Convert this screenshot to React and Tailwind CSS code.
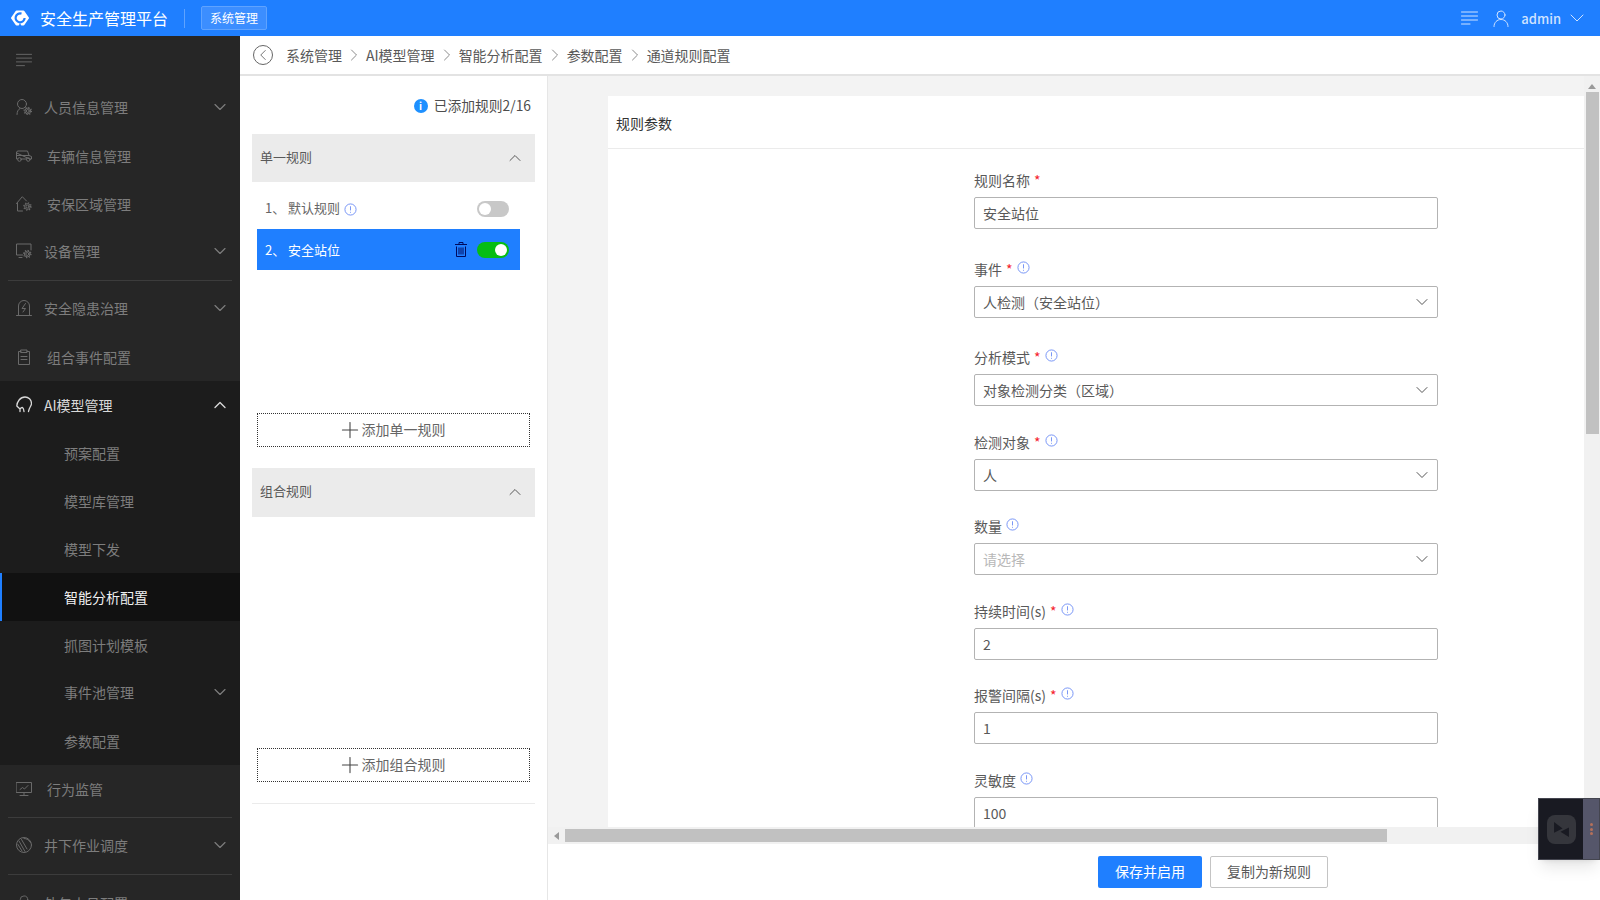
import { ChevronDown, ChevronUp, ChevronRight, ChevronLeft, Plus } from 'lucide-react'

const stroke = { fill: 'none', stroke: 'currentColor', strokeWidth: 1, strokeLinecap: 'round', strokeLinejoin: 'round' }

function Gear({ cx, cy }) {
  return (
    <g {...stroke}>
      <circle cx={cx} cy={cy} r="1.5" />
      <circle cx={cx} cy={cy} r="2.9" />
      <circle cx={cx} cy={cy} r="3.7" strokeDasharray="1.2 1.7" strokeWidth="1.2" strokeLinecap="butt" />
    </g>
  )
}

function MenuLines({ className }) {
  return (
    <svg viewBox="0 0 17 14" className={className} {...stroke}>
      <path d="M0.5 1h16M0.5 5h16M0.5 9h16M0.5 13h8.500" />
    </svg>
  )
}

function IconPerson() {
  return (
    <svg viewBox="0 0 16 16" className="w-4 h-4 shrink-0" {...stroke}>
      <circle cx="6" cy="5" r="4.500" />
      <path d="M1 15.500c0-3 1.200-5 3-6" />
      <Gear cx={11.800} cy={12} />
    </svg>
  )
}

function IconCar() {
  return (
    <svg viewBox="0 0 16 12" className="w-4 h-3 shrink-0" {...stroke}>
      <path d="M.5 2.500V9h1.200M5.300 9h5.400M14 9h1.500V6.500L13 5.500 11.500 1H2a1.500 1.500 0 0 0-1.500 1.500zM.5 5.500H13" />
      <circle cx="3.500" cy="9.500" r="1.800" />
      <circle cx="12.300" cy="9.500" r="1.800" />
    </svg>
  )
}

function IconHome() {
  return (
    <svg viewBox="0 0 16 16" className="w-4 h-4 shrink-0" {...stroke}>
      <path d="M.5 7.500L6.300.7l4.200 4.300M1.500 7v8h5" />
      <Gear cx={11.500} cy={10.500} />
    </svg>
  )
}

function IconMonitor() {
  return (
    <svg viewBox="0 0 16 16" className="w-4 h-4 shrink-0" {...stroke}>
      <path d="M6.500 12H.5V1H15v6M3 14.500h3" />
      <Gear cx={11.300} cy={11} />
    </svg>
  )
}

function IconHazard() {
  return (
    <svg viewBox="0 0 16 16" className="w-4 h-4 shrink-0" {...stroke}>
      <path d="M2.500 15V6a5.500 5.500 0 0 1 11 0v9M.5 15.500h15M9.500 3.500L6 8.500h3.500L7 12" />
    </svg>
  )
}

function IconClipboard() {
  return (
    <svg viewBox="0 0 14 16" className="w-[14px] h-4 shrink-0" {...stroke}>
      <path d="M4 2.500H1.500v13h11v-13H10M4 1h6v2.500H4zM4 7.500h6M4 10.500h6" />
    </svg>
  )
}

function IconHead() {
  return (
    <svg viewBox="0 0 16 17" className="w-4 h-[17px] shrink-0" {...stroke} strokeWidth="1.300">
      <path d="M4 15.500V13L.8 10C1 6 4 1 9 1c3.500 0 6.500 2.500 6.500 6.500 0 2.500-2.500 4-3 8M4 13c2-2.500 3.500-2 4 2.500" />
    </svg>
  )
}

function IconChart() {
  return (
    <svg viewBox="0 0 16 14" className="w-4 h-[14px] shrink-0" {...stroke}>
      <path d="M.5 .5h15v10H.5zM8 10.500V13M4 13.500h8M4 7.500l2.500-2 2 1.500L12 3.500" />
    </svg>
  )
}

function IconGlobe() {
  return (
    <svg viewBox="0 0 16 16" className="w-4 h-4 shrink-0" {...stroke}>
      <circle cx="8" cy="8" r="7.500" />
      <path d="M3 4l6 10.500M5.500 2.500L11 12M2 7.500l4 6.500M8 1.500c3 0 5 1.500 6.500 4" />
    </svg>
  )
}

function IconUser({ className }) {
  return (
    <svg viewBox="0 0 16 17" className={className} {...stroke}>
      <circle cx="8" cy="5" r="4" />
      <path d="M1 16.500c0-4 3-7 7-7s7 3 7 7" />
    </svg>
  )
}

function IconTrash() {
  return (
    <svg viewBox="0 0 12 15" className="w-3 h-[15px] mr-[10px] text-[#000b5e]" fill="none" stroke="currentColor">
      <path d="M0 2.500h12M4 2.500V.5h4v2M1.500 4.500v10h9v-10M4 5.500v7M6 5.500v7M8 5.500v7" />
    </svg>
  )
}

function Logo() {
  return (
    <svg viewBox="0 0 18 16" className="w-[18px] h-4">
      <path fill="#fff" stroke="#fff" strokeWidth="2" strokeLinejoin="round" d="M5.500 1.500h7L17 8l-4.500 6.500h-7L1 8z" />
      <path fill="none" stroke="#1f7fff" strokeWidth="2.200" d="M10.500 3.600A4.500 4.500 0 1 0 13.600 8" />
      <path fill="#1f7fff" d="M7.500 16l1.500-3 1.500 3z" />
    </svg>
  )
}

function Info() {
  return (
    <svg viewBox="0 0 14 14" className="w-[13px] h-[13px] text-[#6f8ff5] shrink-0" fill="none" stroke="currentColor">
      <circle cx="7" cy="7" r="6" />
      <path d="M7 3.500v4.500M7 9.500v1" />
    </svg>
  )
}

function MenuItem({ icon, label, chevron, active, gap }) {
  return (
    <div className={`flex items-center h-full pl-4 pr-[10px] ${active ? 'text-[#d9d9d9]' : 'text-[#7d7d7d]'}`}>
      <span className={`w-4 flex justify-center ${active ? '' : 'text-[#6a6a6a]'}`}>{icon}</span>
      <span className={`flex-1 text-sm ${gap ? 'ml-[15px]' : 'ml-3'}`}>{label}</span>
      {chevron === 'down' && <ChevronDown size={20} strokeWidth={1.4} />}
      {chevron === 'up' && <ChevronUp size={20} strokeWidth={1.6} />}
    </div>
  )
}

function SubItem({ label, chevron, active, className }) {
  return (
    <div className={`flex items-center pr-[10px] text-sm ${className} ${active ? 'bg-[#111111] text-[#f0f0f0] border-l-2 border-[#1f7fff] pl-[62px]' : 'pl-16 text-[#7d7d7d]'}`}>
      <span className="flex-1">{label}</span>
      {chevron && <ChevronDown size={20} strokeWidth={1.4} />}
    </div>
  )
}

function Sidebar() {
  return (
    <aside className="w-60 shrink-0 bg-[#262626] overflow-hidden">
      <div className="h-[47px] flex items-center pl-4 text-[#6a6a6a]">
        <MenuLines className="w-4 h-[14px]" />
      </div>
      <div className="h-[48px]"><MenuItem icon={<IconPerson />} label="人员信息管理" chevron="down" /></div>
      <div className="h-[50px]"><MenuItem icon={<IconCar />} label="车辆信息管理" gap /></div>
      <div className="h-[46px]"><MenuItem icon={<IconHome />} label="安保区域管理" gap /></div>
      <div className="h-[53px] pb-[5px]"><MenuItem icon={<IconMonitor />} label="设备管理" chevron="down" /></div>
      <div className="mx-2 border-t border-[#3c3c3c]" />
      <div className="h-[52px] pt-[2px]"><MenuItem icon={<IconHazard />} label="安全隐患治理" chevron="down" /></div>
      <div className="h-[48px]"><MenuItem icon={<IconClipboard />} label="组合事件配置" gap /></div>
      <div className="bg-[#1c1c1c]">
        <div className="h-[48px] pb-[1px]"><MenuItem icon={<IconHead />} label="AI模型管理" chevron="up" active /></div>
        <SubItem label="预案配置" className="h-[48px]" />
        <SubItem label="模型库管理" className="h-[48px]" />
        <SubItem label="模型下发" className="h-[48px]" />
        <SubItem label="智能分析配置" active className="h-[48px]" />
        <SubItem label="抓图计划模板" className="h-[48px]" />
        <SubItem label="事件池管理" chevron className="h-[46px]" />
        <SubItem label="参数配置" className="h-[50px] pt-[1px]" />
      </div>
      <div className="h-[52px] pb-1"><MenuItem icon={<IconChart />} label="行为监管" gap /></div>
      <div className="mx-2 border-t border-[#3c3c3c]" />
      <div className="h-[56px] pb-[3px]"><MenuItem icon={<IconGlobe />} label="井下作业调度" chevron="down" /></div>
      <div className="mx-2 border-t border-[#3c3c3c]" />
      <div className="h-[56px]"><MenuItem icon={<IconUser className="w-4 h-4 shrink-0" />} label="外包人员配置" /></div>
    </aside>
  )
}

function Switch({ on }) {
  return (
    <span className={`w-8 h-4 rounded-full flex items-center px-0.5 ${on ? 'bg-[#06bd13] justify-end' : 'bg-[#c8c8c8]'}`}>
      <span className="w-3 h-3 rounded-full bg-white" />
    </span>
  )
}

function GroupHeader({ label, className }) {
  return (
    <div className={`mx-3 px-2 bg-[#ebebeb] flex items-center justify-between text-[13px] text-[#595959] ${className}`}>
      <span className="pb-[3px]">{label}</span>
      <ChevronUp size={20} strokeWidth={1.2} className="mr-[2px] mb-[1px]" />
    </div>
  )
}

function AddButton({ label, className }) {
  return (
    <div className={`mx-[17px] h-[34px] border border-dotted border-[#333333] flex items-center justify-center text-sm text-[#666666] ${className}`}>
      <Plus size={26} strokeWidth={1} className="-ml-[5px] -mr-[1px] text-[#444444]" />
      <span className="pb-[2px]">{label}</span>
    </div>
  )
}

function RulePanel() {
  return (
    <div className="w-[308px] shrink-0 border-r border-[#e6e6e6] bg-white">
      <div className="h-[58px] pt-[1px] pr-4 flex items-center justify-end text-[13.800px] text-[#4d4d4d]">
        <span className="w-[14px] h-[14px] mr-1.5 rounded-full bg-[#1e90ff] text-white text-[10px] font-bold leading-[14px] text-center">i</span>
        已添加规则2/16
      </div>
      <GroupHeader label="单一规则" className="h-12" />
      <div className="mt-2 mb-[1px] h-[38px] ml-[17px] w-[263px] pl-2 pr-[11px] flex items-center text-[13px] text-[#666666]">
        <span className="w-[23px] pb-[3px]">1、</span>
        <span className="mr-1 pb-[3px]">默认规则</span>
        <Info />
        <span className="flex-1" />
        <Switch />
      </div>
      <div className="ml-[17px] w-[263px] h-[41px] pl-2 pr-[11px] flex items-center bg-[#1f7fff] text-[13px] text-white">
        <span className="w-[23px]">2、</span>
        <span className="flex-1">安全站位</span>
        <IconTrash />
        <Switch on />
      </div>
      <AddButton label="添加单一规则" className="mt-[143px]" />
      <div className="h-[21px]" />
      <GroupHeader label="组合规则" className="h-[49px]" />
      <AddButton label="添加组合规则" className="mt-[231px]" />
      <div className="mx-3 mt-[21px] border-t border-[#ebebeb]" />
    </div>
  )
}

function Field({ label, required, info, value, placeholder, select, className }) {
  return (
    <div className={className}>
      <div className="flex items-center h-5 text-sm text-[#595959]">
        {label}
        {required && <span className="ml-1 text-[#f5222d]">*</span>}
        {info && <span className="ml-1 -mt-1"><Info /></span>}
      </div>
      <div className="mt-[7px] h-8 pl-2 pr-[5px] rounded-[2px] border border-[#b3b3b3] flex items-center justify-between text-sm text-[#595959]">
        {value ? <span className="pb-[1px]">{value}</span> : <span className="text-[#b8b8b8]">{placeholder}</span>}
        {select && <ChevronDown size={20} strokeWidth={1.2} className="text-[#555555]" />}
      </div>
    </div>
  )
}

function FormPanel() {
  return (
    <div className="flex-1 min-w-0 flex flex-col bg-white">
      <div className="flex flex-1 min-h-0">
        <div className="flex-1 min-w-0 bg-[#f3f3f3] pl-[60px] pt-5 overflow-hidden">
          <div className="bg-white h-full">
            <div className="h-[53px] pl-2 pt-0.5 flex items-center border-b border-[#ebebeb] text-sm text-[#333333]">规则参数</div>
            <div className="w-[464px] ml-[366px]">
              <Field label="规则名称" required value="安全站位" className="mt-[21px]" />
              <Field label="事件" required info select value="人检测（安全站位）" className="mt-[30px]" />
              <Field label="分析模式" required info select value="对象检测分类（区域）" className="mt-[29px]" />
              <Field label="检测对象" required info select value="人" className="mt-[26px]" />
              <Field label="数量" info select placeholder="请选择" className="mt-[25px]" />
              <Field label="持续时间(s)" required info value="2" className="mt-[26px]" />
              <Field label="报警间隔(s)" required info value="1" className="mt-[25px]" />
              <Field label="灵敏度" info value="100" className="mt-[26px]" />
            </div>
          </div>
        </div>
        <div className="w-4 shrink-0 bg-[#f1f1f1] pt-2 flex flex-col items-center">
          <span className="w-0 h-0 border-x-[4px] border-x-transparent border-b-[5px] border-b-[#9a9a9a]" />
          <div className="mt-[3px] w-[13px] h-[342px] bg-[#c1c1c1]" />
        </div>
      </div>
      <div className="h-[17px] shrink-0 bg-[#f1f1f1] flex items-center pl-[6px] pr-4">
        <span className="w-0 h-0 border-y-[4px] border-y-transparent border-r-[5px] border-r-[#9a9a9a]" />
        <div className="ml-[6px] w-[822px] h-[13px] bg-[#c1c1c1]" />
      </div>
      <div className="h-[56px] shrink-0 pr-[272px] flex items-center justify-end gap-2">
        <button className="w-[104px] h-8 pb-[2px] rounded-[2px] bg-[#1f7fff] text-sm text-white">保存并启用</button>
        <button className="w-[118px] h-8 pb-[2px] rounded-[2px] border border-[#c4c4c4] bg-white text-sm text-[#595959]">复制为新规则</button>
      </div>
    </div>
  )
}

const crumbs = ['系统管理', 'AI模型管理', '智能分析配置', '参数配置', '通道规则配置']

export default function App() {
  return (
    <div className="relative w-[1600px] h-[900px] overflow-hidden flex flex-col bg-white font-['Noto_Sans_CJK_SC','Noto_Sans',sans-serif]">
      <header className="h-9 shrink-0 bg-[#1f7fff] flex items-center pl-[11px] pr-[11px] text-white">
        <Logo />
        <span className="ml-[11px] text-base">安全生产管理平台</span>
        <span className="ml-4 h-[19px] border-l border-[#5fa3ff]" />
        <span className="ml-4 h-6 w-[66px] rounded-[2px] border border-[#5fa3ff] bg-[#3c8eff] flex items-center justify-center text-xs">系统管理</span>
        <span className="flex-1" />
        <MenuLines className="w-[17px] h-[14px] text-[#cfe3ff]" />
        <IconUser className="ml-[15px] w-4 h-[17px] text-[#cfe3ff]" />
        <span className="ml-3 mt-0.5 text-[13px] font-medium text-[#cfe3ff]">admin</span>
        <ChevronDown size={24} strokeWidth={1} className="ml-1 text-[#cfe3ff]" />
      </header>
      <div className="flex flex-1 min-h-0">
        <Sidebar />
        <main className="flex-1 min-w-0 flex flex-col">
          <div className="h-10 shrink-0 border-b-2 border-[#e3e3e3] pl-[13px] flex items-center text-sm text-[#595959]">
            <span className="w-5 h-5 mr-[13px] rounded-full border border-[#666666] flex items-center justify-center">
              <ChevronLeft size={18} strokeWidth={1.1} />
            </span>
            {crumbs.map((c, i) => (
              <span key={c} className="flex items-center">
                {i > 0 && <ChevronRight size={20} strokeWidth={1.1} className="mx-[2px] text-[#808080]" />}
                {c}
              </span>
            ))}
          </div>
          <div className="flex flex-1 min-h-0">
            <RulePanel />
            <FormPanel />
          </div>
        </main>
      </div>
      <div className="absolute left-[1538px] top-[798px] w-[62px] h-[62px] flex bg-[#191a22] border border-[#44454f] shadow-lg">
        <div className="flex-1 flex items-center justify-center">
          <span className="w-[29px] h-[29px] rounded-lg bg-[#35363c] flex items-center justify-center">
            <svg viewBox="0 0 16 16" className="w-[17px] h-[17px]">
              <path fill="#191a22" d="M1 1l8 6-8 4zM15 15l-8-5 8-4z" />
            </svg>
          </span>
        </div>
        <div className="w-4 bg-[#55566a] flex flex-col items-center justify-center gap-[1.500px]">
          <span className="w-[3px] h-[3px] rounded-full bg-[#b5705a]" />
          <span className="w-[3px] h-[3px] rounded-full bg-[#b5705a]" />
          <span className="w-[3px] h-[3px] rounded-full bg-[#b5705a]" />
        </div>
      </div>
    </div>
  )
}
